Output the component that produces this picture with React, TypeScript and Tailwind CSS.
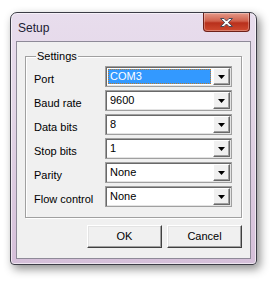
const rows = [
  { label: 'Port', value: 'COM3', selected: true },
  { label: 'Baud rate', value: '9600' },
  { label: 'Data bits', value: '8' },
  { label: 'Stop bits', value: '1' },
  { label: 'Parity', value: 'None' },
  { label: 'Flow control', value: 'None' },
];

function Combo({ value, selected }: { value: string; selected?: boolean }) {
  return (
    <div className="flex h-[21px] w-[127px] border border-[#a0a0a0] bg-white shadow-[inset_1px_1px_0_#696969,inset_-1px_-1px_0_#e3e3e3]">
      <div className="flex flex-1 items-center p-[2px]">
        {selected ? (
          <div className="flex h-full w-full items-center border border-dotted border-[#c07a2a] bg-[#3399ff] pl-[1px] text-white">
            {value}
          </div>
        ) : (
          <span className="pl-[2px]">{value}</span>
        )}
      </div>
      <div className="my-[1px] mr-[1px] flex w-[17px] items-center justify-center border border-t-white border-l-white border-r-[#696969] border-b-[#696969] bg-[#f0f0f0] shadow-[inset_-1px_-1px_0_#a0a0a0]">
        <svg width="7" height="4" viewBox="0 0 7 4">
          <path d="M0 0h7L3.5 4z" fill="#000" />
        </svg>
      </div>
    </div>
  );
}

function Button({ children }: { children: string }) {
  return (
    <button className="flex h-[23px] w-[75px] items-center justify-center border border-t-white border-l-white border-r-[#404040] border-b-[#404040] bg-[#f0f0f0] shadow-[inset_-1px_-1px_0_#a0a0a0,inset_1px_1px_0_#e3e3e3]">
      {children}
    </button>
  );
}

export default function App() {
  return (
    <div className="h-[282px] w-[279px] bg-white pl-[10px] pt-[12px] font-['Liberation_Sans',Arial,sans-serif] text-[11px] text-black">
      <div className="flex h-[253px] w-[247px] flex-col rounded-t-[7px] rounded-b-[4px] border border-[#3c3c46] bg-[linear-gradient(180deg,#e8dded_0%,#e2d5e6_40%,#d5bfd9_100%)] shadow-[3px_4px_10px_rgba(0,0,0,0.45),inset_0_0_0_1px_rgba(255,255,255,0.6)]">
        <div className="flex h-[28px] items-start">
          <span className="ml-[7px] mt-[8px] text-[12px] leading-[14px] text-[#1b1b33]">Setup</span>
          <div className="ml-auto mr-[6px] flex h-[19px] w-[47px] items-center justify-center rounded-b-[4px] border border-t-0 border-[#6e2019] bg-[linear-gradient(180deg,#e59a8a_0%,#d0604b_45%,#b8301c_55%,#cf4a30_100%)] shadow-[inset_0_0_0_1px_rgba(255,255,255,0.3)]">
            <svg width="15" height="11" viewBox="0 0 15 11">
              <path
                d="M1.5 1.5h3.5l2.5 2.5 2.5-2.5h3.5l-4.2 4 4.2 4h-3.5l-2.5-2.5-2.5 2.5h-3.5l4.2-4z"
                fill="#fff"
                stroke="#4a4a5a"
                strokeWidth="1"
                strokeLinejoin="round"
              />
            </svg>
          </div>
        </div>
        <div className="ml-[5px] mr-[5px] flex flex-1 flex-col border border-[#8e8a98] bg-[#f0f0f0] mb-[5px] pl-[8px] pt-[14px]">
          <div className="relative w-[217px] border border-[#a0a0a0] pb-[10px] pl-[8px] pt-[9px] shadow-[inset_1px_1px_0_#fff,1px_1px_0_#fff]">
            <span className="absolute left-[10px] top-[-7px] bg-[#f0f0f0] px-[1px] leading-[13px]">Settings</span>
            <div className="flex flex-col gap-[3px]">
              {rows.map((r) => (
                <div key={r.label} className="flex h-[21px] items-center">
                  <span className="mt-[6px] w-[71px] leading-[13px]">{r.label}</span>
                  <Combo value={r.value} selected={r.selected} />
                </div>
              ))}
            </div>
          </div>
          <div className="mt-[7px] flex gap-[5px] pl-[62px]">
            <Button>OK</Button>
            <Button>Cancel</Button>
          </div>
        </div>
      </div>
    </div>
  );
}
